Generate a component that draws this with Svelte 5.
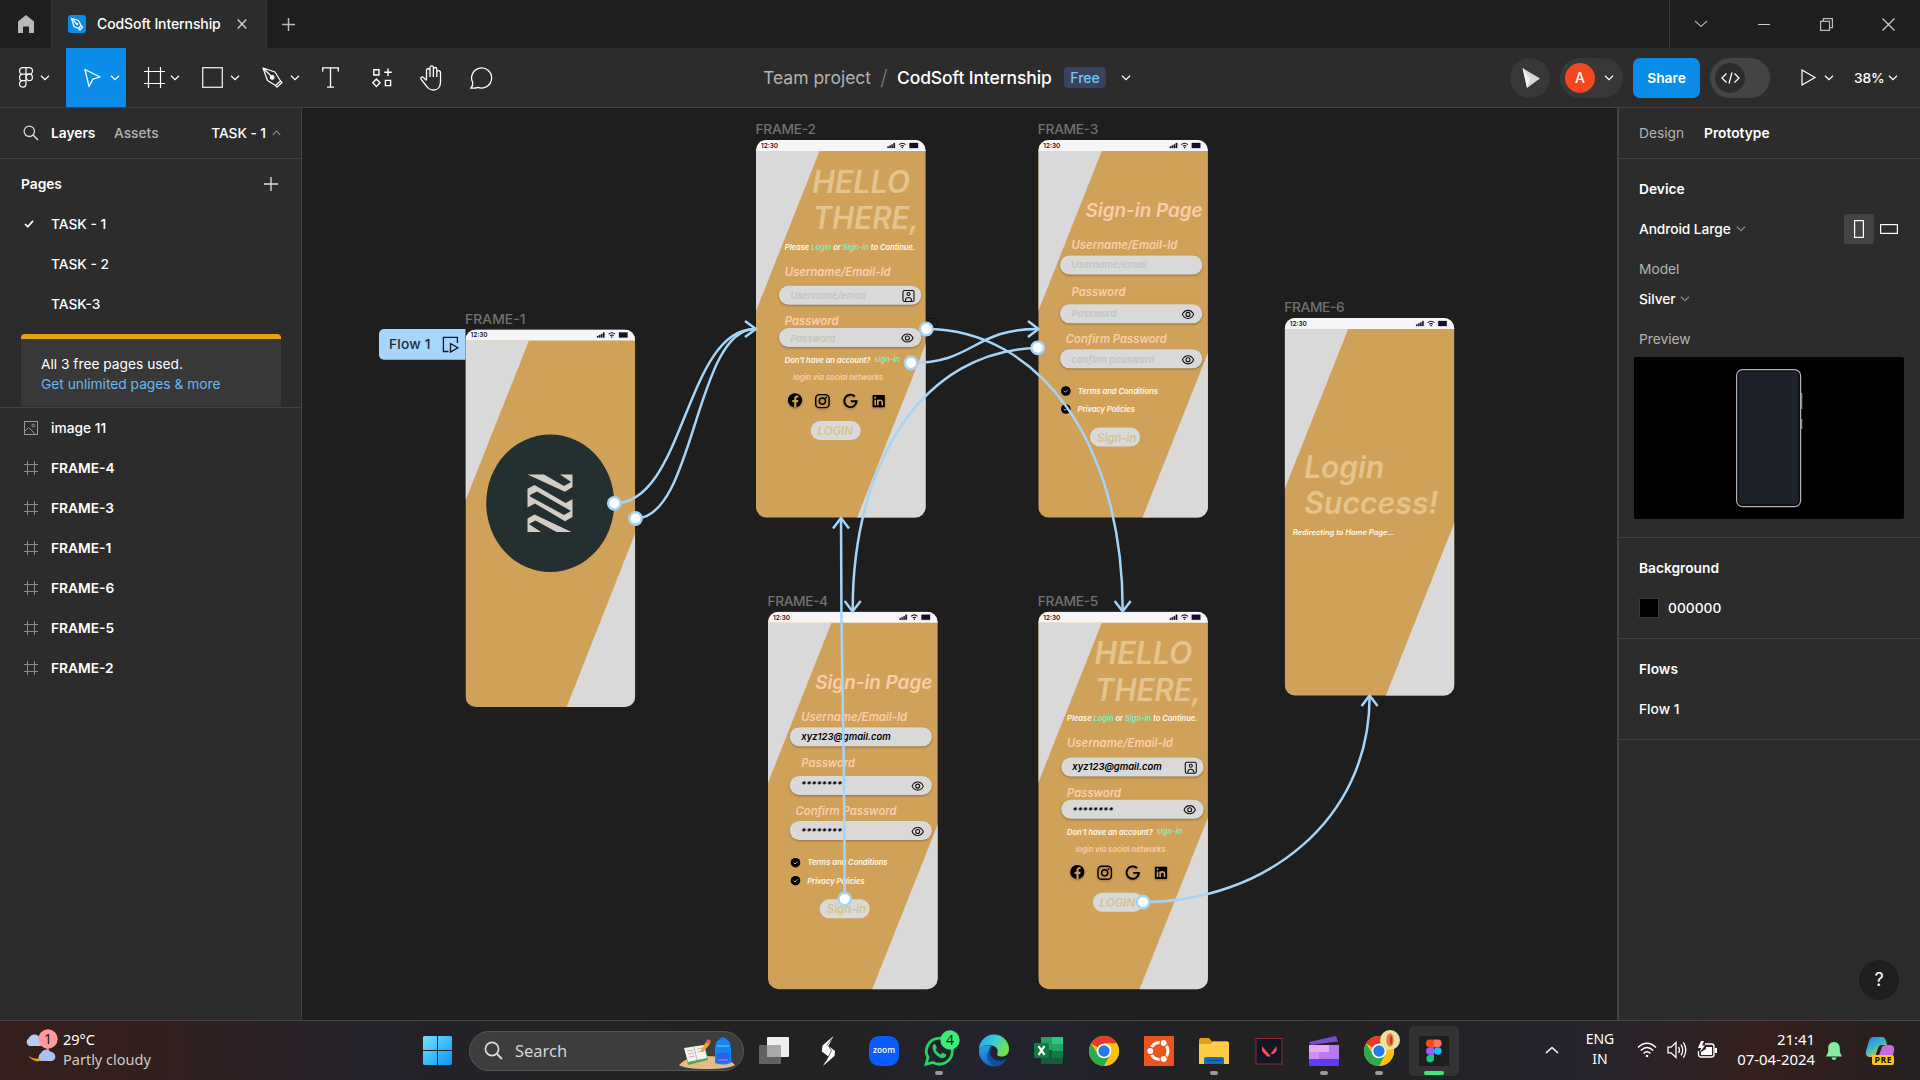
<script>
  const pages = ['TASK - 1', 'TASK - 2', 'TASK-3'];
  const layers = ['FRAME-4', 'FRAME-3', 'FRAME-1', 'FRAME-6', 'FRAME-5', 'FRAME-2'];

  // Frames on the canvas: position, where the band leaves the right edge and the bottom edge
  const frames = [
    { name: 'FRAME-1', kind: 'splash', x: 465.5, y: 329.5, r: 203, b: 101, labelY: -6 },
    { name: 'FRAME-2', kind: 'login', x: 756, y: 140, r: 203, b: 101, labelY: -5.6 },
    { name: 'FRAME-3', kind: 'signup', x: 1038.3, y: 140, r: 212, b: 104, labelY: -5.6 },
    { name: 'FRAME-4', kind: 'signup', filled: true, x: 768, y: 611.7, r: 212, b: 104, labelY: -6.2 },
    { name: 'FRAME-5', kind: 'login', filled: true, x: 1038.3, y: 611.7, r: 205, b: 101, labelY: -6.2 },
    { name: 'FRAME-6', kind: 'success', x: 1284.7, y: 318, r: 204, b: 101, labelY: -6.4 }
  ];

  const wires = [
    'M614.3 503.3C685 503.3 685 329 755 329',
    'M635.5 518.5C695 518.5 695 329 755 329',
    'M926 329C1038 329 1122.7 442 1122.7 610',
    'M911 363C974 363 974 329 1037 329',
    'M1037.7 348C925 350 852.5 460 852.7 610',
    'M844.7 899C844.7 710 841 710 841 519',
    'M1143 902C1265 902 1369.6 820 1369.6 697'
  ];
  const arrows = [
    'M745 321L756 329L745 337',
    'M1028 321L1038.5 329L1028 337',
    'M1114.7 601L1122.7 611.5L1130.7 601',
    'M844.7 601L852.5 611.5L860.7 601',
    'M833 528.5L841 518L849 528.5',
    'M1361.6 706L1369.6 695.5L1377.6 706'
  ];
  const dots = [[614.3, 503.3], [635.5, 518.5], [926.3, 329], [911, 363], [1037.7, 347.8], [844.7, 899], [1143, 902]];
</script>

{#snippet chev(cls = '')}
  <svg class="chev {cls}" width="10" height="6" viewBox="0 0 10 6"><path d="M1 .8L5 4.6L9 .8" fill="none" stroke="currentColor" stroke-width="1.2" /></svg>
{/snippet}

{#snippet label(x, y, w, size, text, cls)}
  <text {x} {y} textLength={w} lengthAdjust="spacingAndGlyphs" font-size={size} class="it {cls}">{text}</text>
{/snippet}

{#snippet field(x, y)}
  <rect {x} y={y} width="142.3" height="19" rx="9.5" fill="#d9d9d9" class="shadow" />
{/snippet}

{#snippet eye(cx, cy)}
  <g transform="translate({cx} {cy})" fill="none" stroke="#111" stroke-width="1.1">
    <path d="M-5.6 0C-3.2 -5.4 3.2 -5.4 5.6 0C3.2 5.4 -3.2 5.4 -5.6 0Z" />
    <circle r="2" />
  </g>
{/snippet}

{#snippet idIcon(x, y)}
  <g transform="translate({x} {y})" fill="none" stroke="#111" stroke-width="1.1">
    <rect x=".5" y=".5" width="11" height="11" rx="1.5" />
    <circle cx="6" cy="4" r="1.5" />
    <path d="M3 11V10.2C3.4 6.6 8.6 6.6 9 10.2V11" />
  </g>
{/snippet}

{#snippet stars(x, y)}
  <text {x} {y} class="it ink" font-size="9.4" textLength="41" lengthAdjust="spacing">********</text>
{/snippet}

{#snippet chrome()}
  <circle cx="15" cy="15" r="15" fill="#fbc116" />
  <path d="M15 15L2 7.5A15 15 0 0 1 28 7.5H15Z" fill="#e33b2e" />
  <path d="M2 7.5A15 15 0 0 0 15 30L21.5 18.7L15 21.5L9 18.5Z" fill="#2da94f" />
  <path d="M28 7.5H15L21.5 18.7L15 30A15 15 0 0 0 28 7.5Z" fill="#fbc116" />
  <circle cx="15" cy="15" r="7.3" fill="#fff" />
  <circle cx="15" cy="15" r="5.7" fill="#2a78ea" />
{/snippet}

<div class="app">
  <header class="tabs">
    <div class="home">
      <svg width="16" height="18" viewBox="0 0 16 18"><path d="M8 0L16 6.5V18H11V11.5H5V18H0V6.5Z" fill="#b8b8b8" /></svg>
    </div>
    <div class="tab">
      <svg width="18" height="18" viewBox="0 0 18 18">
        <rect width="18" height="18" rx="3" fill="#0c8ce9" />
        <path d="M3.5 3.5L10.5 5.5L13 10.5L10.5 13.5L6 11.5ZM3.5 3.5L8.6 8.8M10.5 13.5L12 15L14.5 12L13 10.5" fill="none" stroke="#fff" stroke-width="1.2" />
        <circle cx="9" cy="9" r="1.2" fill="#fff" />
      </svg>
      <span class="tabname">CodSoft Internship</span>
      <svg width="10" height="10" viewBox="0 0 10 10"><path d="M.7 .5L9.3 9.5M9.3 .5L.7 9.5" stroke="#ccc" stroke-width="1.5" /></svg>
    </div>
    <svg class="plus" width="13" height="13" viewBox="0 0 13 13"><path d="M6.5 0V13M0 6.5H13" stroke="#bbb" stroke-width="1.5" /></svg>
    <div class="winctl">
      <svg width="14" height="8" viewBox="0 0 14 8"><path d="M1 1L7 6.5L13 1" fill="none" stroke="#aaa" stroke-width="1.2" /></svg>
      <svg width="12" height="12" viewBox="0 0 12 12"><path d="M0 6.5H12" stroke="#ccc" /></svg>
      <svg width="13" height="13" viewBox="0 0 13 13"><path d="M.6 3.4H9.5V12.4H.6ZM3.4 3.4V.6H12.4V9.6H9.5" fill="none" stroke="#bbb" stroke-width="1.2" /></svg>
      <svg width="13" height="13" viewBox="0 0 13 13"><path d="M.5 .5L12.5 12.5M12.5 .5L.5 12.5" stroke="#ccc" stroke-width="1.2" /></svg>
    </div>
  </header>

  <div class="toolbar">
    <div class="tools">
      <div class="tool menu">
        <svg width="14" height="21" viewBox="0 0 14 21" fill="none" stroke="#fff" stroke-width="1.2">
          <path d="M7 .7H3.8A3.2 3.2 0 0 0 3.8 7.2H7ZM7 .7H10.2A3.2 3.2 0 0 1 10.2 7.2H7ZM7 7.2H3.8A3.2 3.2 0 0 0 3.8 13.7H7ZM7 13.7H3.8A3.2 3.2 0 1 0 7 17Z" />
          <circle cx="10.2" cy="10.4" r="3.2" />
        </svg>
        {@render chev()}
      </div>
      <div class="tool active">
        <svg width="18" height="20" viewBox="0 0 18 20"><path d="M1 1.5L16 9L8.8 11.2L5 18.5Z" fill="none" stroke="#fff" stroke-width="1.3" stroke-linejoin="round" /></svg>
        {@render chev()}
      </div>
      <div class="tool">
        <svg width="21" height="21" viewBox="0 0 21 21"><path d="M4.5 0V21M16.5 0V21M0 4.5H21M0 16.5H21" stroke="#fff" stroke-width="1.2" /></svg>
        {@render chev()}
      </div>
      <div class="tool wide">
        <svg width="21" height="21" viewBox="0 0 21 21"><rect x=".7" y=".7" width="19.6" height="19.6" fill="none" stroke="#e8e8e8" stroke-width="1.3" /></svg>
        {@render chev()}
      </div>
      <div class="tool wide">
        <svg width="21" height="21" viewBox="0 0 21 21" fill="none" stroke="#fff" stroke-width="1.2" stroke-linejoin="round">
          <path d="M1 1L13 5L18.5 14L13.5 18.5L5.5 13.5ZM1 1L9 9M13.5 18.5L15 20L20 15.5L18.5 14" />
          <circle cx="10.2" cy="10.4" r="1.8" fill="#fff" />
        </svg>
        {@render chev()}
      </div>
      <svg class="solo t" width="17" height="21" viewBox="0 0 17 21"><path d="M.7 4.5V.8H16.3V4.5M8.5 .8V20M5 20.2H12" fill="none" stroke="#fff" stroke-width="1.3" /></svg>
      <svg class="solo c" width="20" height="20" viewBox="0 0 20 20"><path d="M1.8 1.8H7V7H1.8ZM16 .5V8M12.2 4.2H19.8M4.4 11L8 14.8L4.4 18.6L.8 14.8ZM13.4 12.4H18.6V17.6H13.4Z" fill="none" stroke="#fff" stroke-width="1.4" /></svg>
      <svg class="solo h" width="24" height="26" viewBox="0 0 24 26"><path d="M7.5 15V5.5A1.7 1.7 0 0 1 11 5.5V12M11 5.5V2.6A1.7 1.7 0 0 1 14.4 2.6V12M14.4 4.2A1.7 1.7 0 0 1 17.8 4.2V12M17.8 7.5A1.7 1.7 0 0 1 21.5 7.5V17C21.5 22 18.5 25 14.5 25C10.5 25 8.6 23 7 20.5L2 14.2C1 12.5 3.2 11.4 4.4 12.4L7.5 15.5" fill="none" stroke="#fff" stroke-width="1.3" /></svg>
      <svg class="solo" width="23" height="22" viewBox="0 0 23 22"><path d="M1 21C2.8 19 3 17.5 2.7 15.5A10 10 0 1 1 8 20.3C5.8 21.2 3.5 21.2 1 21Z" fill="none" stroke="#fff" stroke-width="1.3" /></svg>
    </div>
    <div class="title">
      <span class="team">Team project</span><span class="slash">/</span><span class="doc">CodSoft Internship</span><span class="free">Free</span>{@render chev()}
    </div>
    <div class="right">
      <div class="spot">
        <svg width="20" height="22" viewBox="0 0 20 22"><path d="M1.5 1L19 11.5L6 21Z" fill="#d6d8df" /><path d="M1.5 1L9 12L6 21Z" fill="#fff" opacity=".7" /></svg>
      </div>
      <div class="user"><span class="avatar">A</span>{@render chev()}</div>
      <button class="share">Share</button>
      <div class="dev">
        <span><svg width="19" height="12" viewBox="0 0 19 12"><path d="M5.5 1.5L1 6L5.5 10.5M13.5 1.5L18 6L13.5 10.5M11 .5L8 11.5" fill="none" stroke="#fff" stroke-width="1.3" /></svg></span>
      </div>
      <svg class="play" width="15" height="17" viewBox="0 0 15 17"><path d="M1 1L14 8.5L1 16Z" fill="none" stroke="#fff" stroke-width="1.2" /></svg>
      {@render chev()}
      <span class="zoom">38%</span>
      {@render chev()}
    </div>
  </div>

  <main>
    <aside class="left">
      <div class="phead">
        <svg width="16" height="16" viewBox="0 0 16 16"><circle cx="6.3" cy="6.3" r="5.2" fill="none" stroke="#ddd" stroke-width="1.3" /><path d="M10 10L15 15" stroke="#ddd" stroke-width="1.4" /></svg>
        <b class="lay">Layers</b><span class="ass">Assets</span>
        <span class="cur">TASK - 1</span>
        <svg class="up" width="9" height="6" viewBox="0 0 9 6"><path d="M.8 5L4.5 1L8.2 5" fill="none" stroke="#999" stroke-width="1.1" /></svg>
      </div>
      <div class="pages">
        <div class="pagehead"><b>Pages</b><svg width="14" height="14" viewBox="0 0 14 14"><path d="M7 0V14M0 7H14" stroke="#ddd" stroke-width="1.3" /></svg></div>
        {#each pages as p, i}
          <div class="page">
            <span class="tick">{#if i === 0}<svg width="10" height="8" viewBox="0 0 10 8"><path d="M1 4L3.8 6.7L9 .9" fill="none" stroke="#fff" stroke-width="1.7" /></svg>{/if}</span>{p}
          </div>
        {/each}
        <div class="banner">All 3 free pages used.<span class="more">Get unlimited pages &amp; more</span></div>
      </div>
      <div class="layers">
        <div class="layer img">
          <svg width="14" height="14" viewBox="0 0 14 14" fill="none" stroke="#999"><rect x=".5" y=".5" width="13" height="13" /><path d="M1 10L4.8 6.5L11.5 13.5" /><circle cx="9.3" cy="4.5" r="1.4" /></svg>
          image 11
        </div>
        {#each layers as l}
          <div class="layer">
            <svg width="14" height="14" viewBox="0 0 14 14"><path d="M3.5 0V14M10.5 0V14M0 3.5H14M0 10.5H14" stroke="#8c8c8c" /></svg>
            {l}
          </div>
        {/each}
      </div>
    </aside>

    <section class="canvas">
      <svg width="1315" height="912" viewBox="302 108 1315 912">
        <defs>
          <clipPath id="body"><rect width="169.6" height="377.5" rx="10.5" /></clipPath>
        </defs>
        <g opacity=".8">{@render idIcon(926, 318)}</g>
        {#each frames as f}
          <g transform="translate({f.x} {f.y})">
            <text x="-.5" y={f.labelY} font-size="13.75" textLength="60.5" fill="#717171">{f.name}</text>
            <g clip-path="url(#body)">
              <rect width="170" height="378" fill="#d0a159" />
              <path d="M0 11H63.5L0 171Z" fill="#d9d9d9" />
              <path d="M170 {f.r}V378H{f.b}Z" fill="#d9d9d9" />
              <rect width="170" height="11" fill="#f6f5f7" />
            </g>
            <text x="5" y="7.9" font-size="6.6" textLength="17" lengthAdjust="spacingAndGlyphs" font-weight="600" fill="#170e2b">12:30</text>
            <path d="M131.5 6.5H132.8V8H131.5ZM133.5 5.5H134.8V8H133.5ZM135.5 4.5H136.8V8H135.5ZM137.5 3H138.9V8H137.5ZM153.5 3H162V8H153.5Z" fill="#170e2b" stroke="#170e2b" stroke-width=".3" />
            <path d="M143 4.6Q146.3 1.8 149.6 4.6M144.5 6.2Q146.3 4.8 148.1 6.2" fill="none" stroke="#170e2b" stroke-width="1.1" />
            <circle cx="146.3" cy="7.6" r=".8" fill="#170e2b" />

            {#if f.kind === 'splash'}
              <ellipse cx="84.7" cy="173.7" rx="64" ry="68.8" fill="#243030" />
              <g fill="#d3cec5">
                <path d="M62 145H78.5L98.5 156.5L105.7 152.5L94.5 145H107V157.5L99.5 162.3Z" />
                <path d="M62 159.2L69 155.5L100 173.5L107 169.8V187.5L99.5 191.7L69.5 174L62 178ZM64.5 165.5V167L98.5 185.5L105.5 181.5L71.5 162Z" fill-rule="evenodd" />
                <path d="M62 189L69 185L106 202.5H91L70 191L63.5 194.5L75.5 202.5H62Z" />
              </g>
            {:else if f.kind === 'success'}
              {@render label(19.5, 159.7, 80, 30.6, 'Login', 'big')}
              {@render label(19.5, 196, 134, 30.6, 'Success!', 'big')}
              {@render label(8, 216.5, 102, 7.3, 'Redirecting to Home Page...', 'wh')}
            {:else if f.kind === 'login'}
              {@render label(56.3, 52.5, 97.8, 30.6, 'HELLO', 'big')}
              {@render label(56.5, 89, 106.5, 30.6, 'THERE,', 'big')}
              <text x="28.8" y="109.6" font-size="7.4" textLength="130.5" lengthAdjust="spacingAndGlyphs" class="it wh">Please <tspan class="mint">Login</tspan> or <tspan class="mint">Sign-in</tspan> to Continue.</text>
              {@render label(28.8, 135.8, 105.8, 11.4, 'Username/Email-Id', 'pk')}
              {@render field(23, 145.8)}
              {@render idIcon(146.5, 150)}
              {@render label(28.8, 185, 53.8, 11.4, 'Password', 'pk')}
              {@render field(23, 188)}
              {@render eye(151.4, 198)}
              {#if f.filled}
                {@render label(34, 158, 89.5, 9.6, 'xyz123@gmail.com', 'ink')}
                {@render stars(34, 202)}
              {:else}
                {@render label(34.5, 158.6, 75.2, 9.6, 'Username/email', 'ph')}
                {@render label(34.5, 201.9, 44.8, 9.6, 'Password', 'ph')}
              {/if}
              {@render label(28.8, 223, 85.6, 7.6, "Don't have an account?", 'wh')}
              {@render label(118.4, 221.9, 25.5, 7.6, 'sign-in', 'mint')}
              {@render label(37.2, 240, 90, 7.6, 'login via social networks', 'pk')}
              <g class="shadow">
                <circle cx="39" cy="260.3" r="7.1" fill="#000" />
                <path d="M38.2 267.4V262.2H36.3V260H38.2V258.5C38.2 256.5 39.3 255.5 41.1 255.5L42.4 255.6V257.4H41.4C40.5 257.4 40.3 257.9 40.3 258.6V260H42.3L42 262.2H40.3V267.4Z" fill="#d0a159" />
                <g fill="none" stroke="#000" stroke-width="1.4"><rect x="59.7" y="254.6" width="13.4" height="13" rx="3.6" /><circle cx="66.4" cy="261.1" r="3.1" /></g>
                <circle cx="70.2" cy="257.5" r=".9" />
                <path d="M98.8 256.5A6.2 6.2 0 1 0 100.6 261.2H94.8" fill="none" stroke="#000" stroke-width="1.9" />
                <rect x="116.6" y="255" width="12.2" height="12.2" rx=".8" />
                <path d="M119.2 259.8V265.3M121.8 265.3V259.8M121.8 262.6C121.8 259.6 126.2 259.2 126.2 262.6V265.3" fill="none" stroke="#d0a159" stroke-width="1.6" />
                <circle cx="119.2" cy="257.6" r="1" fill="#d0a159" />
              </g>
              <rect x="54.7" y="281" width="50" height="19" rx="9.5" fill="#d9d9d9" />
              {@render label(61.5, 295, 35.4, 11.4, 'LOGIN', 'go')}
            {:else}
              {@render label(47.2, 77, 117, 19, 'Sign-in Page', 'pk')}
              {@render label(33.3, 109.3, 105.8, 11.4, 'Username/Email-Id', 'pk')}
              {@render field(21.7, 115.5)}
              {@render label(33.3, 155.7, 53.8, 11.4, 'Password', 'pk')}
              {@render field(21.7, 164.2)}
              {@render label(27.5, 202.9, 101, 11.4, 'Confirm Password', 'pk')}
              {@render field(21.7, 209.3)}
              {@render eye(149.7, 174.4)}
              {@render eye(149.7, 219.8)}
              {#if f.filled}
                {@render label(33.3, 128, 89.5, 9.6, 'xyz123@gmail.com', 'ink')}
                {@render stars(33, 176.5)}
                {@render stars(33, 223)}
              {:else}
                {@render label(33.3, 128, 75.2, 9.6, 'Username/email', 'ph')}
                {@render label(33.3, 176.6, 44.8, 9.6, 'Password', 'ph')}
                {@render label(33.3, 223, 82.5, 9.6, 'confirm password', 'ph')}
              {/if}
              {#each [251, 269] as cy}
                <circle cx="27.5" {cy} r="4.8" fill="#000" />
                <path d="M25.6 {cy}L27 {cy + 1.3}L29.5 {cy - 1.4}" fill="none" stroke="#ddd" stroke-width=".8" />
              {/each}
              {@render label(39.5, 253.7, 80, 7.6, 'Terms and Conditions', 'wh')}
              {@render label(39.3, 272.4, 57.2, 7.6, 'Privacy Policies', 'wh')}
              <rect x="51.7" y="287.5" width="50" height="19" rx="9.5" fill="#d9d9d9" />
              {@render label(58.8, 301.7, 39.4, 11.4, 'Sign-in', 'go')}
            {/if}
          </g>
        {/each}

        <path d="M465.5 329H384A5 5 0 0 0 379 334V354.7A5 5 0 0 0 384 359.7H465.5Z" fill="#a8d6fb" />
        <text x="389" y="349" font-size="13.75" font-weight="500" textLength="41.5" fill="#1e2b36">Flow 1</text>
        <path d="M448.5 351.5H443.4V337.4H457.4V343M450.5 343.5L457.8 347.7L450.5 352Z" fill="none" stroke="#10181f" stroke-width="1.3" />

        <g fill="none" stroke="#a5d4f9" stroke-width="2.5">
          {#each wires as d}<path {d} />{/each}
          {#each arrows as d}<path {d} />{/each}
        </g>
        {#each dots as [cx, cy]}
          <circle {cx} {cy} r="6.2" fill="#fff" stroke="#a5d4f9" stroke-width="2.4" />
        {/each}
      </svg>
    </section>

    <aside class="inspector">
      <div class="phead ph2"><span class="dim">Design</span><b>Prototype</b></div>
      <div class="sec device">
        <div class="row"><b>Device</b></div>
        <div class="row">
          <span class="sel">Android Large</span>{@render chev('soft')}
          <span class="orient on"><svg width="10" height="18" viewBox="0 0 10 18"><rect x=".6" y=".6" width="8.8" height="16.8" fill="none" stroke="#fff" stroke-width="1.2" /></svg></span>
          <span class="orient"><svg width="18" height="10" viewBox="0 0 18 10"><rect x=".6" y=".6" width="16.8" height="8.8" fill="none" stroke="#fff" stroke-width="1.2" /></svg></span>
        </div>
        <div class="row dim">Model</div>
        <div class="row short"><span class="sel">Silver</span>{@render chev('soft')}</div>
        <div class="row dim prev">Preview</div>
        <div class="preview">
          <svg width="68" height="140" viewBox="0 0 68 140">
            <rect x="1.6" y="1.6" width="64" height="137" rx="6" fill="#0a0c0f" stroke="#b4b3ad" stroke-width="1.2" />
            <rect x="3.6" y="3.6" width="60" height="133" rx="4.5" fill="#1c212a" />
            <path d="M66.6 25V41M66.6 51V61" stroke="#888" stroke-width="1.4" />
          </svg>
        </div>
      </div>
      <div class="sec bg">
        <div class="row"><b>Background</b></div>
        <div class="row"><i class="swatch"></i>000000</div>
      </div>
      <div class="sec bg">
        <div class="row"><b>Flows</b></div>
        <div class="row">Flow 1</div>
      </div>
      <div class="help">?</div>
    </aside>
  </main>

  <footer>
    <div class="weather">
      <svg width="34" height="38" viewBox="0 0 34 38">
        <path d="M20 12A11 11 0 1 1 4 26A9 9 0 0 0 20 12Z" fill="#f39b1d" />
        <path d="M5 17A4.5 4.5 0 0 1 5 9A6 6 0 0 1 16 9A4 4 0 0 1 16 17Z" fill="#b9cdf0" />
        <path d="M17 32A4.5 4.5 0 0 1 17 24A6 6 0 0 1 27 23A4.6 4.6 0 0 1 28 32Z" fill="#a9c1ee" />
        <circle cx="24" cy="10" r="9.7" fill="#fd9a9c" />
        <text x="24" y="15" text-anchor="middle" font-size="14" fill="#111">1</text>
      </svg>
      <p><span>29°C</span><span class="cloudy">Partly cloudy</span></p>
    </div>
    <svg class="win" width="29" height="29" viewBox="0 0 29 29">
      <defs><linearGradient id="w" x1="0" y1="0" x2="1" y2="1"><stop offset="0" stop-color="#72e3fd" /><stop offset="1" stop-color="#0b96f3" /></linearGradient></defs>
      <path d="M1 0H14V14H0V1ZM15 0H28L29 1V14H15ZM0 15H14V29H1L0 28ZM15 15H29V28L28 29H15Z" fill="url(#w)" />
    </svg>
    <div class="search">
      <svg width="19" height="19" viewBox="0 0 19 19"><circle cx="8" cy="8" r="6.6" fill="none" stroke="#ddd" stroke-width="1.7" /><path d="M13 13L18 18" stroke="#ddd" stroke-width="1.8" /></svg>
      <span>Search</span>
      <svg class="art" width="57" height="32" viewBox="0 0 57 32">
        <path d="M0 27Q8 18 28 18T56 27Q50 31 28 31T0 27Z" fill="#e6bb8b" />
        <path d="M6 12L26 8L29 22L9 27Z" fill="#5da44c" />
        <path d="M5 10L15 8.5L25 7L28 20L18 22L9 24Z" fill="#f4f3f0" />
        <path d="M15 8.5L18 22M8 13L14 12M9 16L15 15M10 19L16 18M18 11L24 10M19 14L25 13" stroke="#aaa" stroke-width=".8" />
        <path d="M21 14L27 4L31 6L24 14Z" fill="#f3a52a" /><path d="M27 4L29 1L32 3L31 6Z" fill="#f05b4c" />
        <path d="M40 3Q44 -3 48 3" fill="none" stroke="#1d7fe0" stroke-width="1.4" />
        <path d="M36 25V10Q36 1 44 1T52 10V25Q44 28 36 25Z" fill="#1583f0" />
        <path d="M38 8H50" stroke="#53b3ff" stroke-width="1.5" /><path d="M37.5 15H50.5V23Q44 26 37.5 23Z" fill="#2b5fe8" /><path d="M39 22H49" stroke="#a06cff" stroke-width="1.6" />
      </svg>
    </div>
    <div class="apps">
      <div class="app-i"><svg viewBox="0 0 30 30"><rect x="8" y="1" width="22" height="20" rx="1" fill="#efefef" /><rect x="0" y="9" width="22" height="19" rx="1" fill="#6d6d6d" opacity=".85" /><rect x="8" y="9" width="14" height="12" fill="#a9a9a9" /></svg></div>
      <div class="app-i"><svg viewBox="0 0 30 30"><path d="M19.5 0L8.5 9.5L7.8 15.5L14.5 20.5L9 30L20.5 20L21 15L14.5 10Z" fill="#fff" /><path d="M18 2.5L13.5 8.5L17.5 14.5L11.5 26" fill="none" stroke="#3a3a3a" stroke-width=".8" /></svg></div>
      <div class="app-i"><svg viewBox="0 0 30 30"><rect width="30" height="30" rx="10" fill="#0b5cff" /><text x="15" y="17.2" text-anchor="middle" font-size="8.2" font-weight="600" textLength="22" fill="#fff">zoom</text></svg></div>
      <div class="app-i"><svg viewBox="0 0 30 30"><path d="M2 28.3L4 21.5A13 13 0 1 1 8.8 26.4Z" fill="none" stroke="#28d366" stroke-width="2.8" /><path d="M9.2 8.5C11 7.2 11.6 8.2 12.6 11C13.2 12.4 11.6 12.9 11.6 13.8C12.8 16 14.6 17.6 16.6 18.4C17.6 18 18 16.6 19 16.9L22.2 18.6C22.6 20.4 20.6 22.3 18.4 22.2C12.8 21.6 6.6 14.2 9.2 8.5Z" fill="#28d366" /><circle cx="26" cy="4" r="9.7" fill="#3deb78" /><text x="26" y="9" text-anchor="middle" font-size="14" fill="#111">4</text></svg><i></i></div>
      <div class="app-i"><svg viewBox="0 0 30 30">
        <defs>
          <linearGradient id="e1" x1="0" y1="0" x2="1" y2=".4"><stop offset="0" stop-color="#1aa5ea" /><stop offset=".55" stop-color="#3cc9d8" /><stop offset="1" stop-color="#75e24c" /></linearGradient>
          <linearGradient id="e2" x1="0" y1="0" x2=".4" y2="1"><stop offset="0" stop-color="#2aa7e8" /><stop offset="1" stop-color="#1062bd" /></linearGradient>
        </defs>
        <path d="M0 14A15 15 0 0 1 30 13C30 18 26.5 20.5 22.5 20.5C19 20.5 17.5 19 18.5 17C20 13 16 9 10 9C5 9 1 11 0 14Z" fill="url(#e1)" />
        <path d="M0 14C2 9.5 8 8 13 10C10 12 9 16 10.5 20C12.5 25.5 19 28 25.5 26A15 15 0 0 1 0 14Z" fill="url(#e2)" />
        <path d="M12.5 12C9 18 14 26.5 23 24.5L28 22.5C26 26.5 22 29.5 17 30C8 28 5 17 12.5 12Z" fill="#0d4f9c" />
      </svg></div>
      <div class="app-i"><svg viewBox="0 0 30 30"><rect x="7" y="1" width="22" height="27" rx="1.5" fill="#185c37" /><path d="M7 1H18V14H7Z" fill="#21a366" /><path d="M18 1H29V8H18Z" fill="#33c481" /><path d="M18 8H29V15H18Z" fill="#21a366" /><path d="M18 15H29V22H18Z" fill="#107c41" /><rect x="0" y="7" width="15" height="15" rx="1.4" fill="#107c41" /><path d="M4.5 10.2L10.5 18.8M10.5 10.2L4.5 18.8" stroke="#fff" stroke-width="2.2" /></svg></div>
      <div class="app-i"><svg viewBox="0 0 30 30">{@render chrome()}</svg></div>
      <div class="app-i"><svg viewBox="0 0 30 30"><rect width="30" height="30" fill="#e95420" /><circle cx="15.4" cy="15" r="8.6" fill="none" stroke="#fff" stroke-width="3" /><g fill="#fff" stroke="#e95420" stroke-width="1.3"><circle cx="6.3" cy="15" r="3.6" /><circle cx="19.7" cy="7" r="3.6" /><circle cx="19.7" cy="23" r="3.6" /></g></svg></div>
      <div class="app-i"><svg viewBox="0 0 30 30"><path d="M0 4Q0 2 2 2H10L13 5.5H28Q30 5.5 30 7.5V26H0Z" fill="#dfa016" /><path d="M0 8H12L14 5.5H28Q30 5.5 30 7.5V28H0Z" fill="#fccd45" /><path d="M5 28V23Q5 21 7 21H23Q25 21 25 23V28Z" fill="#0f6fc0" /><path d="M8 24.5H22" stroke="#0a4a8a" /></svg><i></i></div>
      <div class="app-i"><svg viewBox="0 0 30 30"><rect x="2" y="2.5" width="26" height="25.5" fill="#0f1822" stroke="#8d2c38" /><path d="M8 10L17 20.5H13L8 15ZM22.5 10V15L19.5 18H16.5Z" fill="#ff4655" /></svg></div>
      <div class="app-i"><svg viewBox="0 0 30 30"><path d="M0 6L27 0L29 5.5L2 9Z" fill="#7a4bd0" /><path d="M0 9H30V28Q30 30 28 30H2Q0 30 0 28Z" fill="#b779f0" /><path d="M0 9H20V16H0Z" fill="#eaa8fb" /><path d="M0 16H10V23H0Z" fill="#d08df6" /><path d="M0 23H30V30H0Z" fill="#5b3ff0" /></svg><i></i></div>
      <div class="app-i"><svg viewBox="0 0 30 30">{@render chrome()}<circle cx="26" cy="4" r="10" fill="#e5e3a0" /><ellipse cx="26" cy="4" rx="3.8" ry="6.8" fill="#f0743e" /><ellipse cx="27" cy="4" rx="1.2" ry="4.5" fill="#c7372b" /></svg><i></i></div>
      <div class="app-i sel-app"><svg viewBox="0 0 30 30"><rect width="30" height="30" fill="#1e1e1e" /><path d="M15 3.5H10.8A3.8 3.8 0 0 0 10.8 11.2H15Z" fill="#f24e1e" /><path d="M15 3.5H18.8A3.8 3.8 0 0 1 18.8 11.2H15Z" fill="#ff7262" /><path d="M15 11.2H10.8A3.8 3.8 0 0 0 10.8 18.8H15Z" fill="#a259ff" /><circle cx="18.8" cy="15" r="3.8" fill="#1abcfe" /><path d="M15 18.8H10.8A3.8 3.8 0 1 0 15 22.6Z" fill="#0acf83" /></svg><i class="on"></i></div>
    </div>
    <div class="tray">
      <svg class="caret" width="14" height="8" viewBox="0 0 14 8"><path d="M1 7L7 1.5L13 7" fill="none" stroke="#fff" stroke-width="1.6" /></svg>
      <p class="lang"><span>ENG</span><span>IN</span></p>
      <svg class="ic" width="20" height="16" viewBox="0 0 20 16" fill="none" stroke="#fff" stroke-width="1.5"><path d="M1 5.5Q10 -3 19 5.5M3.8 8.5Q10 2.5 16.2 8.5M6.6 11.4Q10 8.2 13.4 11.4" /><circle cx="10" cy="14" r="1.3" fill="#fff" stroke="none" /></svg>
      <svg class="ic" width="20" height="18" viewBox="0 0 20 18" fill="none" stroke="#fff" stroke-width="1.3"><path d="M1 6.2H4L9 1.5V16.5L4 11.8H1ZM11.6 6Q13.4 9 11.6 12M14 3.6Q17.4 9 14 14.4M16.4 1.4Q21.2 9 16.4 16.6" /></svg>
      <svg class="ic" width="20" height="18" viewBox="0 0 20 18"><path d="M8 3H14.5A2.5 2.5 0 0 1 17 5.5V13.5A2.5 2.5 0 0 1 14.5 16H4A2.5 2.5 0 0 1 1.5 13.5V10" fill="none" stroke="#fff" stroke-width="1.4" /><path d="M9 6H15V14H4V11L9 8ZM18 7H20V12H18ZM4 0L1 7H4L3 11L8 4.5H5L7 0Z" fill="#fff" /></svg>
      <p class="clock"><span>21:41</span><span>07-04-2024</span></p>
      <svg class="bell" width="18" height="20" viewBox="0 0 18 20"><path d="M9 1C5 1 3.2 4 3.2 7V11L1 15.5H17L14.8 11V7C14.8 4 13 1 9 1ZM6.5 16.5A2.5 2.5 0 0 0 11.5 16.5Z" fill="#87eda5" /></svg>
      <svg width="30" height="30" viewBox="0 0 30 30">
        <defs><linearGradient id="cp" x1="0" y1="0" x2=".6" y2="1"><stop offset="0" stop-color="#2d7df0" /><stop offset=".5" stop-color="#31b6c9" /><stop offset="1" stop-color="#e8c53a" /></linearGradient></defs>
        <path d="M9 1H17Q20 1 21 5L22 9H17Q14 9 13 12L10 21H5Q0 21 1 15L4 5Q5 1 9 1Z" fill="url(#cp)" />
        <path d="M22 9H25Q30 9 29 15L28 19H14L17 11Q18 9 22 9Z" fill="#c46be0" />
        <rect x="7" y="19" width="22" height="10" rx="2" fill="#fcc419" /><text x="18" y="27.3" text-anchor="middle" font-size="8.6" font-weight="700" textLength="17" fill="#111">PRE</text>
      </svg>
    </div>
  </footer>
</div>

<style>
  :global(body) { margin: 0; background: #1e1e1e; }
  .app { width: 1920px; height: 1080px; display: flex; flex-direction: column; overflow: hidden; font: 500 13.75px/20px Inter, sans-serif; color: #fff; background: #1e1e1e; box-sizing: border-box; }
  .app :global(*) { box-sizing: border-box; }
  svg { display: block; flex: none; overflow: visible; }
  b { font-weight: 600; }
  p { margin: 0; }

  .tabs { height: 48px; flex: none; display: flex; align-items: center; background: #1e1e1e; }
  .home { width: 52px; height: 48px; border-right: 1px solid #383838; display: flex; align-items: center; justify-content: center; }
  .tab { width: 215px; height: 48px; background: #2c2c2c; border-right: 1px solid #383838; display: flex; align-items: center; padding-left: 16px; }
  .tabname { width: 124px; margin: 0 16px 0 11px; font-size: 14px; letter-spacing: -.1px; white-space: nowrap; }
  .plus { margin-left: 15px; }
  .winctl { margin-left: auto; height: 48px; width: 251px; border-left: 1px solid #383838; display: grid; grid-template-columns: repeat(4, 62.5px); align-items: center; justify-items: center; }

  .toolbar { height: 60px; flex: none; background: #2c2c2c; border-bottom: 1px solid #444; display: grid; grid-template-columns: 763px 1fr auto; align-items: center; }
  .tools { display: flex; align-items: center; height: 59px; }
  .tool { width: 60px; height: 59px; display: flex; align-items: center; justify-content: space-between; padding: 0 6px 0 18px; }
  .wide { padding-left: 16px; }
  .menu { width: 66px; padding: 0 16px 0 19px; }
  .active { background: #0c8ce9; }
  .tool.active svg:first-child { margin-top: 1px; }
  .t { margin-left: 16px; }
  .c { margin-left: 33px; }
  .h { margin: 0 27px 0 27px; }
  .title { display: flex; align-items: center; font-size: 17.5px; font-weight: 400; white-space: nowrap; }
  .team { width: 108px; color: #b3b3b3; }
  .slash { width: 26px; text-align: center; color: #7a7a7a; font-size: 21px; font-weight: 300; }
  .doc { width: 155px; margin-right: 12px; font-weight: 500; letter-spacing: -.12px; }
  .free { width: 42px; height: 21px; margin-right: 15px; border-radius: 4px; background: #394360; color: #7cc4f8; font-size: 14px; font-weight: 500; line-height: 21px; text-align: center; }
  .right { display: flex; align-items: center; padding-right: 22px; }
  .spot { width: 40px; height: 40px; border-radius: 20px; background: #383838; display: flex; align-items: center; justify-content: center; padding-left: 2px; }
  .user { width: 63px; height: 40px; margin-left: 10px; border-radius: 20px; background: #383838; display: flex; align-items: center; justify-content: space-between; padding: 0 9px 0 5px; }
  .avatar { width: 30px; height: 30px; border-radius: 50%; background: #f24822; line-height: 30px; text-align: center; font-size: 14px; }
  .share { width: 67px; height: 40px; margin: 0 10px; padding: 0; border: 0; border-radius: 7px; background: #0c8ce9; color: #fff; font: 600 13.75px Inter, sans-serif; }
  .dev { width: 60px; height: 40px; border-radius: 20px; background: #444; padding: 5px; margin-right: 31px; }
  .dev span { width: 30px; height: 30px; border-radius: 50%; background: #2c2c2c; display: flex; align-items: center; justify-content: center; }
  .play { margin-right: 8px; }
  .zoom { width: 29px; margin: 0 5px 0 20px; letter-spacing: -.1px; }

  main { height: 912px; flex: none; display: grid; grid-template-columns: 302px 1315px 303px; }
  aside { background: #2c2c2c; }
  .left { border-right: 1px solid #444; }
  .phead { height: 51px; border-bottom: 1px solid #444; display: flex; align-items: center; padding: 0 20px 0 23px; }
  .lay { width: 63px; margin-left: 12px; }
  .ass { color: #b3b3b3; }
  .cur { margin-left: auto; margin-right: 6px; letter-spacing: -.05px; }
  .pages { height: 249px; border-bottom: 1px solid #444; padding: 0 20px 0 21px; }
  .pagehead { height: 45px; padding: 5px 3px 0 0; display: flex; align-items: center; justify-content: space-between; }
  .page { height: 40px; display: flex; align-items: center; }
  .tick { width: 30px; padding-left: 3px; }
  .banner { height: 72px; margin-top: 10px; background: #383838; border-top: 5px solid #e5a512; border-radius: 4px 4px 0 0; padding: 15px 20px 0; font-weight: 400; }
  .more { display: block; color: #6cb8f2; }
  .layer { height: 40px; display: flex; align-items: center; gap: 13px; padding-left: 24px; font-weight: 600; }
  .img { font-weight: 500; }

  .canvas { background: #1e1e1e; }
  .canvas svg { font-family: Inter, sans-serif; }
  .it { font-style: italic; font-weight: 600; }
  .big { fill: #e3c48c; }
  .pk { fill: #fbceaa; }
  .wh { fill: #fffbea; }
  .mint { fill: #7df0c8; }
  .ph { fill: #c4c4bb; }
  .ink { fill: #000; }
  .go { fill: #d3c48c; }
  .shadow { filter: drop-shadow(0 1.6px .9px rgba(0, 0, 0, .3)); }

  .inspector { border-left: 2px solid #444; display: flex; flex-direction: column; }
  .ph2 { gap: 20px; padding-left: 20px; flex: none; }
  .dim { color: #b3b3b3; font-weight: 400; }
  .sec { border-bottom: 1px solid #444; }
  .device { height: 379px; padding-top: 10px; }
  .row { height: 40px; display: flex; align-items: center; padding-left: 20px; }
  .short { height: 20px; }
  .device .short + .prev { height: 50px; margin-bottom: -10px; padding-top: 10px; }
  .sel { margin-right: 5px; letter-spacing: -.08px; }
  .soft { color: #8a8a8a; }
  .orient { width: 30px; height: 30px; border-radius: 2px; display: flex; align-items: center; justify-content: center; }
  .on { margin-left: auto; background: #444; }
  .orient:last-child { margin-right: 16px; }
  .preview { width: 270px; height: 162px; margin: 8px 0 0 15px; background: #000; border-radius: 2px; display: flex; align-items: center; justify-content: center; }
  .bg { height: 101px; padding-top: 10px; }
  .swatch { width: 20px; height: 20px; background: #000; border: 1px solid #3a3a3a; margin-right: 9px; }
  .help { width: 40px; height: 40px; margin: auto 21px 20px auto; border-radius: 50%; background: #1e1e1e; line-height: 40px; text-align: center; font-size: 18px; font-weight: 400; }

  footer { height: 60px; flex: none; border-top: 1px solid #4a4747; display: flex; align-items: center; font: 400 14.5px/20px "Noto Sans", "Open Sans", sans-serif; background: linear-gradient(90deg, #351f1d 0, #31201f 170px, #24222b 370px, #242224 560px, #232222 820px, #22232f 1000px, #222223 1200px, #232225 1450px, #24242e 1560px, #34201e 1760px, #251f20 1920px); }
  footer p { display: flex; flex-direction: column; padding-bottom: 4px; }
  footer text { font-family: "Open Sans", sans-serif; }
  .weather { width: 423px; flex: none; display: flex; align-items: center; padding-left: 24px; gap: 5px; }
  .weather svg { margin-top: -6px; }
  .cloudy { color: #d0c9c9; }
  .search { width: 275px; height: 40px; margin-left: 17px; border: 1px solid #565656; border-radius: 20px; background: #3d3d3d; display: flex; align-items: center; padding: 0 7px 0 14px; font-size: 16.5px; }
  .search span { margin-left: 12px; color: #d4d4d4; }
  .art { margin: 6px 0 0 auto; }
  .apps { display: flex; margin-left: 5px; gap: 5px; }
  .app-i { width: 50px; height: 50px; border-radius: 5px; display: grid; place-items: center; position: relative; }
  .app-i svg { width: 30px; height: 30px; }
  .app-i i { position: absolute; bottom: 1px; left: 21px; width: 8px; height: 4px; border-radius: 2px; background: #9a9a9a; }
  .app-i i.on { left: 15px; width: 20px; background: #3fe975; margin: 0; }
  .sel-app { background: #333336; }
  .tray { margin-left: auto; display: flex; align-items: center; padding-right: 25px; font-size: 14px; }
  .tray .caret { margin-top: -2px; }
  .lang { width: 40px; margin: 0 17px 0 21px; align-items: center; }
  .ic { margin: -2px 10px 0 0; }
  .clock { width: 88px; align-items: flex-end; font-size: 14.9px; }
  .bell { margin: 0 22px 0 10px; }
</style>
